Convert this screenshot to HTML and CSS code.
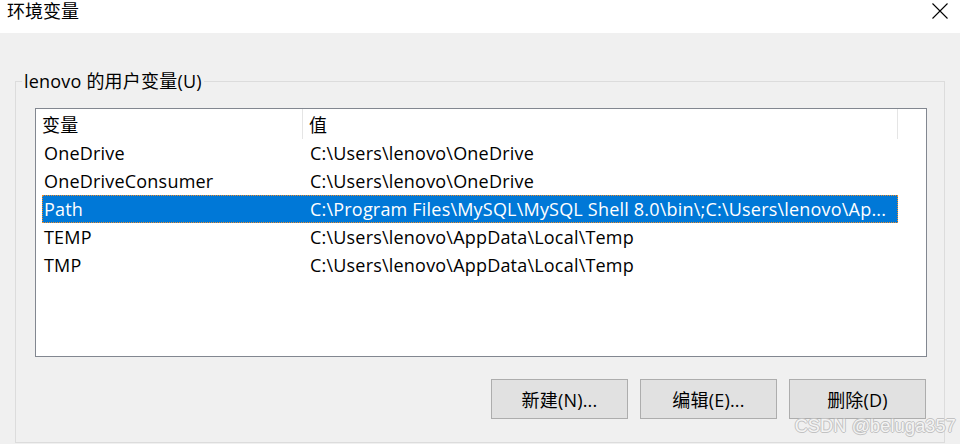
FILE: index.html
```html
<!DOCTYPE html>
<html lang="zh-CN">
<head>
<meta charset="utf-8">
<title>环境变量</title>
<link rel="stylesheet" href="styles.css">
</head>
<body>
<div class="window">
  <div class="titlebar">
    <span class="title">环境变量</span>
    <svg class="close" width="16" height="16" viewBox="0 0 16 16"><path d="M0.5 0.5 L15.5 15.5 M15.5 0.5 L0.5 15.5" stroke="#000" stroke-width="1.1" fill="none"/></svg>
  </div>
  <div class="content">
    <fieldset class="group">
      <legend class="group-title">lenovo 的用户变量(U)</legend>
      <div class="listview">
        <div class="lv-header">
          <div class="hcol hcol1">变量</div>
          <div class="hcol hcol2">值</div>
          <div class="hcol hcol3"></div>
        </div>
        <div class="lv-rows">
          <div class="row"><span class="c1">OneDrive</span><span class="c2">C:\Users\lenovo\OneDrive</span></div>
          <div class="row"><span class="c1">OneDriveConsumer</span><span class="c2">C:\Users\lenovo\OneDrive</span></div>
          <div class="row selected"><span class="c1">Path</span><span class="c2">C:\Program Files\MySQL\MySQL Shell 8.0\bin\;C:\Users\lenovo\Ap...</span></div>
          <div class="row"><span class="c1">TEMP</span><span class="c2">C:\Users\lenovo\AppData\Local\Temp</span></div>
          <div class="row"><span class="c1">TMP</span><span class="c2">C:\Users\lenovo\AppData\Local\Temp</span></div>
        </div>
      </div>
      <div class="buttons">
        <button class="btn">新建(N)...</button>
        <button class="btn">编辑(E)...</button>
        <button class="btn">删除(D)</button>
      </div>
    </fieldset>
    <div class="watermark">CSDN @beluga357</div>
  </div>
</div>
</body>
</html>
```
FILE: styles.css
```css
* { box-sizing: border-box; }
html, body {
  margin: 0;
  padding: 0;
  background: #f0f0f0;
}
body {
  font-family: "Open Sans", "Noto Sans CJK SC", sans-serif;
  font-size: 18px;
  letter-spacing: 0.2px;
  color: #000;
  width: 960px;
  height: 444px;
  overflow: hidden;
}
.window {
  width: 960px;
  height: 444px;
  display: flex;
  flex-direction: column;
}
.titlebar {
  height: 33px;
  background: #fff;
  display: flex;
  justify-content: space-between;
  align-items: flex-start;
  padding: 0 12px 0 7px;
}
.title {
  font-size: 18px;
  line-height: 22px;
  letter-spacing: 0;
}
.close {
  margin-top: 3px;
  display: block;
}
.content {
  flex: 1;
  position: relative;
  padding-top: 37px;
}
.group {
  margin: 0 15px;
  border: 1px solid #dcdcdc;
  padding: 16px 17px 23px 19px;
  min-width: 0;
}
.group-title {
  margin-left: -13px;
  padding: 0 2px;
  line-height: 22px;
  height: 22px;
}
.listview {
  height: 249px;
  border: 1px solid #828790;
  background: #fff;
  display: flex;
  flex-direction: column;
}
.lv-header {
  height: 30px;
  display: flex;
}
.hcol {
  line-height: 30px;
  height: 30px;
  padding-top: 1px;
}
.hcol1 {
  width: 267px;
  padding-left: 6px;
  border-right: 1px solid #e5e5e5;
}
.hcol2 {
  width: 595px;
  padding-left: 6px;
  border-right: 1px solid #e5e5e5;
}
.hcol3 { flex: 1; }
.lv-rows {
  padding-left: 6px;
}
.row {
  width: 856px;
  height: 28px;
  line-height: 28px;
  display: flex;
  white-space: nowrap;
  overflow: hidden;
  padding-left: 1px;
  border: 1px solid transparent;
}
.row .c1 {
  width: 266px;
  flex: none;
  margin-top: -1px;
}
.row .c2 {
  flex: 1;
  overflow: hidden;
  margin-top: -1px;
}
.row.selected {
  background: #0078d7;
  color: #fff;
  border: 1px dotted #f08c28;
}
.buttons {
  margin-top: 22px;
  margin-right: 1px;
  display: flex;
  justify-content: flex-end;
  gap: 12px;
}
.btn {
  width: 137px;
  height: 40px;
  background: #e1e1e1;
  border: 1px solid #adadad;
  font-family: "Open Sans", "Noto Sans CJK SC", sans-serif;
  font-size: 18px;
  letter-spacing: 0.2px;
  color: #000;
  padding: 0;
}
.watermark {
  position: absolute;
  right: 4px;
  bottom: 7px;
  font-family: "Liberation Sans", Arial, sans-serif;
  font-size: 18px;
  letter-spacing: 0.2px;
  color: #f4f4f4;
  text-shadow: 1px 0 0 #c2c2c2, -1px 0 0 #c2c2c2, 0 1px 0 #c2c2c2, 0 -1px 0 #c2c2c2;
}
```
